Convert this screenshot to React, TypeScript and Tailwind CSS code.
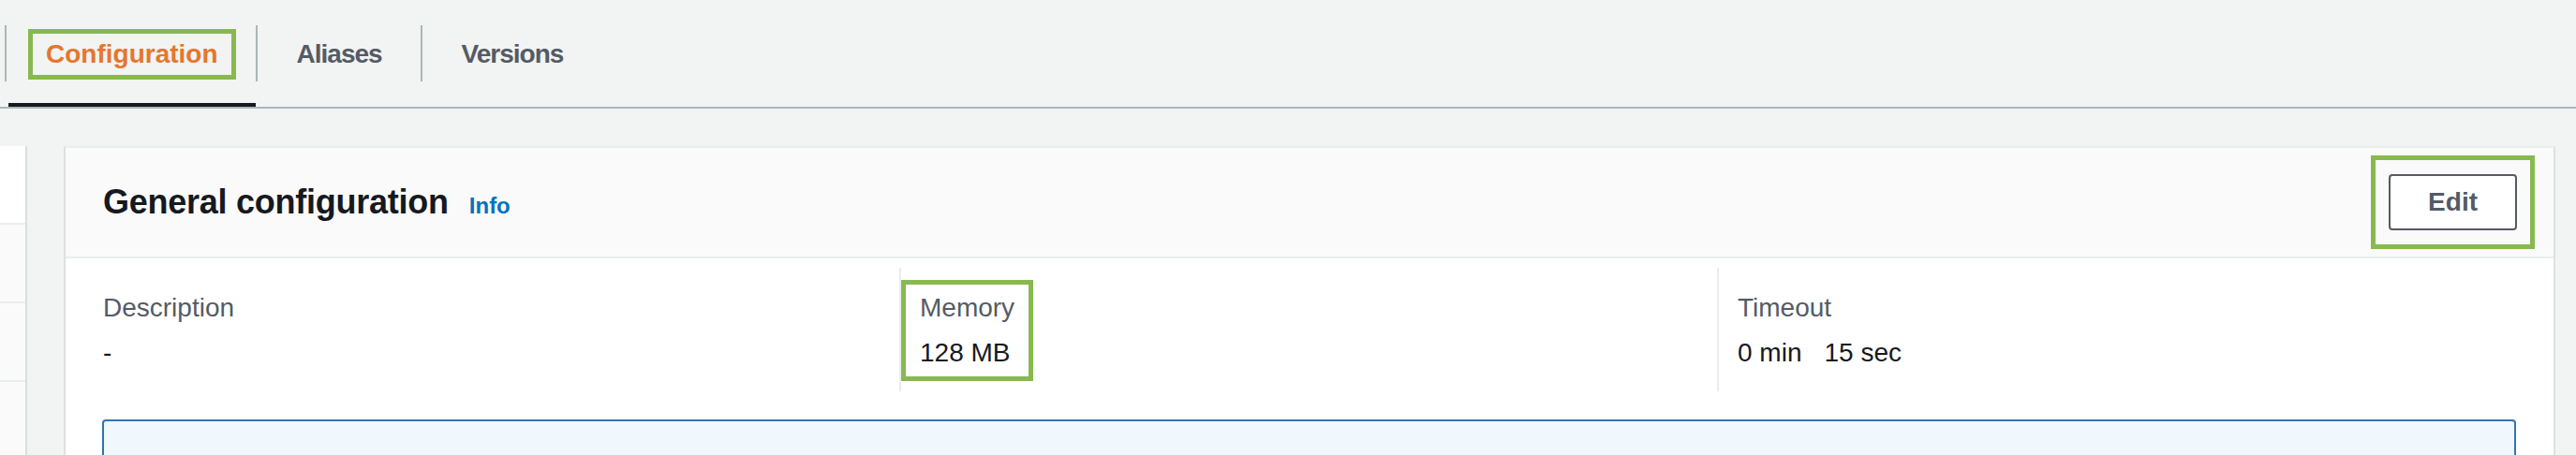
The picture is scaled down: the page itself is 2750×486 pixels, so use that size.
import React from 'react';

const tabs = [
  { label: 'Configuration', active: true },
  { label: 'Aliases', active: false },
  { label: 'Versions', active: false },
];

const columns = [
  { label: 'Description', value: <span>-</span> },
  { label: 'Memory', value: <span>128 MB</span>, highlight: true },
  {
    label: 'Timeout',
    value: (
      <>
        <span>0 min</span>
        <span className="ml-[24px]">15 sec</span>
      </>
    ),
  },
];

const Separator = () => <div className="h-[60px] w-[2px] self-center bg-[#aab7b8]" />;

function TabBar() {
  return (
    <div className="flex h-[116px] border-b-2 border-[#aab7b8] pl-[5px]">
      <Separator />
      {tabs.map((tab) => (
        <React.Fragment key={tab.label}>
          {tab.active ? (
            <div className="ml-[2px] flex h-full items-center border-b-4 border-[#16191f] px-[21px] pt-[6px]">
              {/* annotation box */}
              <span className="border-[5px] border-[#88b94f] px-[14px] py-[2px] text-[28px] font-bold leading-[40px] text-[#e4772f]">
                {tab.label}
              </span>
            </div>
          ) : (
            <div className="flex h-full items-center border-b-4 border-transparent pl-[42px] pr-[41px] pt-[6px]">
              <span className="text-[28px] font-bold leading-[40px] tracking-[-1px] text-[#545b64]">{tab.label}</span>
            </div>
          )}
          {tab.label !== 'Versions' && <Separator />}
        </React.Fragment>
      ))}
    </div>
  );
}

function SideNav() {
  return (
    <div className="w-[29px] shrink-0 border-r-2 border-[#dadede]">
      <div className="h-[82px] bg-white" />
      <div className="h-[84px] border-t-2 border-[#eaeded] bg-[#fafafa]" />
      <div className="h-[84px] border-t-2 border-[#eaeded] bg-[#fafafa]" />
      <div className="h-[84px] border-t-2 border-[#eaeded] bg-[#fafafa]" />
    </div>
  );
}

function GeneralConfiguration() {
  return (
    <div className="ml-[39px] mr-[22px] flex-1 border-x-2 border-t-2 border-[#dde1e1] border-t-[#eaeded] bg-white">
      {/* Header */}
      <div className="flex h-[118px] items-center justify-between border-b-2 border-[#eaeded] bg-[#fafafa] pl-[40px] pr-[20px]">
        <div className="flex items-baseline">
          <h2 className="text-[36px] font-bold leading-[48px] tracking-[-0.25px] text-[#16191f]">General configuration</h2>
          <span className="ml-[22px] text-[24px] font-bold text-[#0073bb]">Info</span>
        </div>
        <div className="border-[5px] border-[#88b94f] px-[14px] py-[15px]">
          <button className="rounded-[4px] border-2 border-[#545b64] bg-white px-[40px] py-[8px] text-[28px] font-bold leading-[40px] text-[#545b64]">
            Edit
          </button>
        </div>
      </div>

      {/* Body */}
      <div className="pt-[10px]">
        <div className="grid grid-cols-3 pl-[17px] pr-[20px]">
          {columns.map((col, i) =>
            col.highlight ? (
              <div key={col.label} className="border-l-2 border-[#eaeded] pb-[11px] pt-[13px]">
                <div className="w-fit border-[5px] border-[#88b94f] px-[15px] py-[5px]">
                  <div className="text-[28px] leading-[40px] text-[#545b64]">{col.label}</div>
                  <div className="mt-[8px] text-[28px] leading-[40px] text-[#16191f]">{col.value}</div>
                </div>
              </div>
            ) : (
              <div
                key={col.label}
                className={
                  i === 0
                    ? 'pb-[21px] pl-[23px] pt-[23px]'
                    : 'border-l-2 border-[#eaeded] pb-[21px] pl-[20px] pt-[23px]'
                }
              >
                <div className="text-[28px] leading-[40px] text-[#545b64]">{col.label}</div>
                <div className="mt-[8px] text-[28px] leading-[40px] text-[#16191f]">{col.value}</div>
              </div>
            )
          )}
        </div>

        {/* Info alert (cut off) */}
        <div className="ml-[39px] mr-[40px] mt-[30px] h-[120px] rounded-[4px] border-2 border-[#2f74b8] bg-[#f1f8fd]" />
      </div>
    </div>
  );
}

export default function App() {
  return (
    <div className="h-[486px] w-[2750px] overflow-hidden bg-[#f2f3f3] font-['Liberation_Sans',Arial,sans-serif]">
      <TabBar />
      <div className="mt-[40px] flex">
        <SideNav />
        <GeneralConfiguration />
      </div>
    </div>
  );
}
